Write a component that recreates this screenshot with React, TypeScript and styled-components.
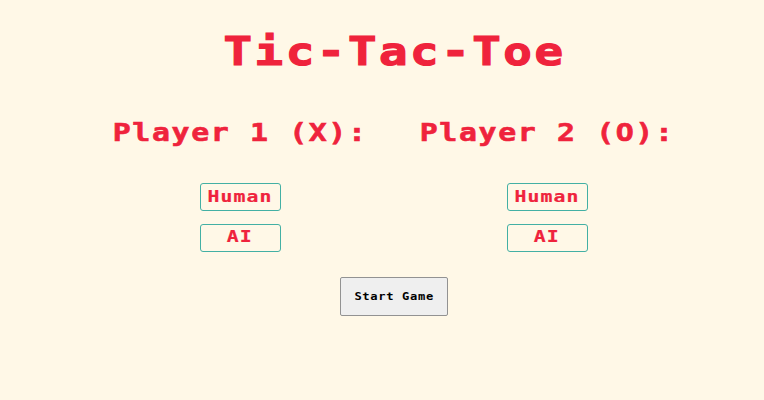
import React, { useState } from "react";
import styled, { createGlobalStyle } from "styled-components";

const GlobalStyle = createGlobalStyle`
  * { box-sizing: border-box; }
  body {
    margin: 0;
    background: #fff8e7;
    color: #ef233c;
    font-family: "DejaVu Sans Mono", "Liberation Mono", monospace;
    font-weight: 700;
  }
`;

const Page = styled.main`
  min-height: 400px;
  padding: 26px 0 0 24px;
  display: flex;
  flex-direction: column;
  align-items: center;
`;

const WideText = styled.span<{ $size: number; $stroke: number }>`
  display: inline-block;
  font-size: ${(p) => p.$size}px;
  letter-spacing: 0.054em;
  white-space: pre;
  transform: scaleX(1.2);
  -webkit-text-stroke: ${(p) => p.$stroke}px currentColor;
`;

const Title = styled.h1`
  margin: 0;
  padding-left: 2px;
  height: 50px;
  line-height: 50px;
`;

const Players = styled.section`
  display: grid;
  grid-template-columns: 253px 253px;
  column-gap: 54px;
  margin-top: 37px;
`;

const Player = styled.div`
  display: flex;
  flex-direction: column;
  align-items: center;
`;

const PlayerName = styled.h2`
  margin: 0 0 30px;
  padding-right: 1px;
  height: 40px;
  line-height: 40px;
`;

const Choices = styled.div`
  display: grid;
  row-gap: 12.5px;
`;

const Choice = styled.button`
  width: 80.5px;
  height: 28px;
  padding: 0 1px 1px 0;
  border: 1px solid #43b0a4;
  border-radius: 3px;
  background: transparent;
  color: inherit;
  font: inherit;
  line-height: 24px;
`;

const StartButton = styled.button`
  width: 108px;
  height: 38.5px;
  margin-top: 25.5px;
  padding: 0 0 4px;
  border: 1px solid #929292;
  border-radius: 2px;
  background: #efefef;
  color: #000;
  font: inherit;
`;

const players = ["Player 1 (X):", "Player 2 (O):"];
const kinds = ["Human", "AI"];

export default function App() {
  const [, setSelected] = useState<Record<string, string>>({});
  return (
    <>
      <GlobalStyle />
      <Page>
        <Title>
          <WideText $size={39.5} $stroke={1.2}>Tic-Tac-Toe</WideText>
        </Title>
        <Players>
          {players.map((name) => (
            <Player key={name}>
              <PlayerName>
                <WideText $size={24.9} $stroke={0.6}>{name}</WideText>
              </PlayerName>
              <Choices>
                {kinds.map((kind) => (
                  <Choice
                    key={kind}
                    onClick={() => setSelected((s) => ({ ...s, [name]: kind }))}
                  >
                    <WideText $size={16.5} $stroke={0.2}>{kind}</WideText>
                  </Choice>
                ))}
              </Choices>
            </Player>
          ))}
        </Players>
        <StartButton>
          <WideText $size={10.1} $stroke={0}>Start Game</WideText>
        </StartButton>
      </Page>
    </>
  );
}
